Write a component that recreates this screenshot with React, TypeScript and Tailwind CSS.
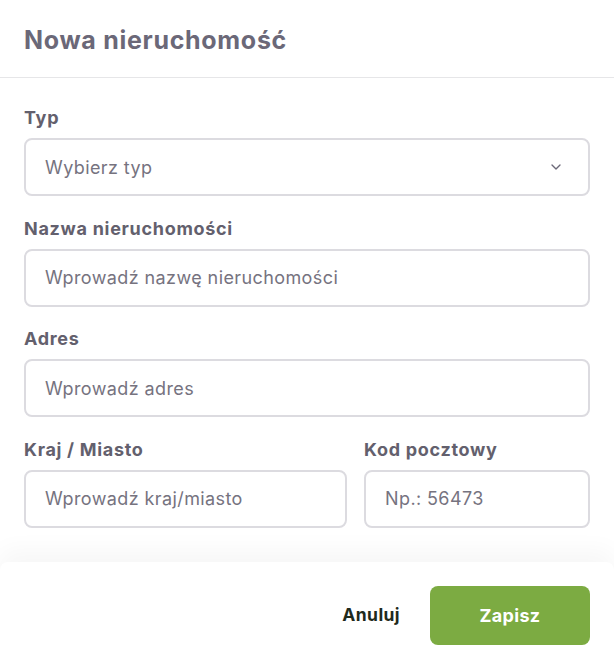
import { ChevronDown } from "lucide-react";

const inputCls =
  "h-[58px] w-full rounded-lg border-2 border-[#dcdbe0] bg-white px-[19px] text-[18px] tracking-[0.4px] text-[#67646f] placeholder:text-[#76737f] outline-none";

const labelCls = "mb-[10px] text-[18px] font-bold leading-5 tracking-[0.7px] text-[#63606d]";

function Field({ label, placeholder }: { label: string; placeholder: string }) {
  return (
    <div className="flex flex-col">
      <label className={labelCls}>{label}</label>
      <input className={inputCls} placeholder={placeholder} />
    </div>
  );
}

export default function App() {
  return (
    <div className="flex h-[672px] w-[614px] flex-col bg-white font-['Inter',sans-serif]">
      <header className="flex h-[78px] items-center border-b border-[#e6e6e8] px-6 pt-[5px]">
        <h1 className="text-[25px] font-bold tracking-[0.7px] text-[#6b6878]">Nowa nieruchomość</h1>
      </header>

      <main className="flex flex-1 flex-col gap-[22.5px] px-6 pt-[30px]">
        <div className="flex flex-col">
          <label className={labelCls}>Typ</label>
          <button className="flex h-[58px] w-full items-center justify-between rounded-lg border-2 border-[#dcdbe0] bg-white pl-[19px] pr-[24px] text-[18px] tracking-[0.4px] text-[#76737f]">
            <span>Wybierz typ</span>
            <ChevronDown className="h-4 w-4 text-[#6b6878]" strokeWidth={2} />
          </button>
        </div>
        <Field label="Nazwa nieruchomości" placeholder="Wprowadź nazwę nieruchomości" />
        <Field label="Adres" placeholder="Wprowadź adres" />
        <div className="flex gap-[17px]">
          <div className="w-[323px]">
            <Field label="Kraj / Miasto" placeholder="Wprowadź kraj/miasto" />
          </div>
          <div className="flex-1">
            <Field label="Kod pocztowy" placeholder="Np.: 56473" />
          </div>
        </div>
      </main>

      <footer className="flex h-[110px] items-start justify-end gap-[30px] rounded-t-lg bg-white px-6 pt-6 shadow-[0_-12px_24px_rgba(0,0,0,0.035)]">
        <button className="h-[59px] text-[17.5px] font-bold tracking-[0.4px] text-[#1f2a1c]">Anuluj</button>
        <button className="h-[59px] w-[160px] rounded-lg bg-[#7cab42] text-[18px] font-bold tracking-[0.3px] text-white">Zapisz</button>
      </footer>
    </div>
  );
}
